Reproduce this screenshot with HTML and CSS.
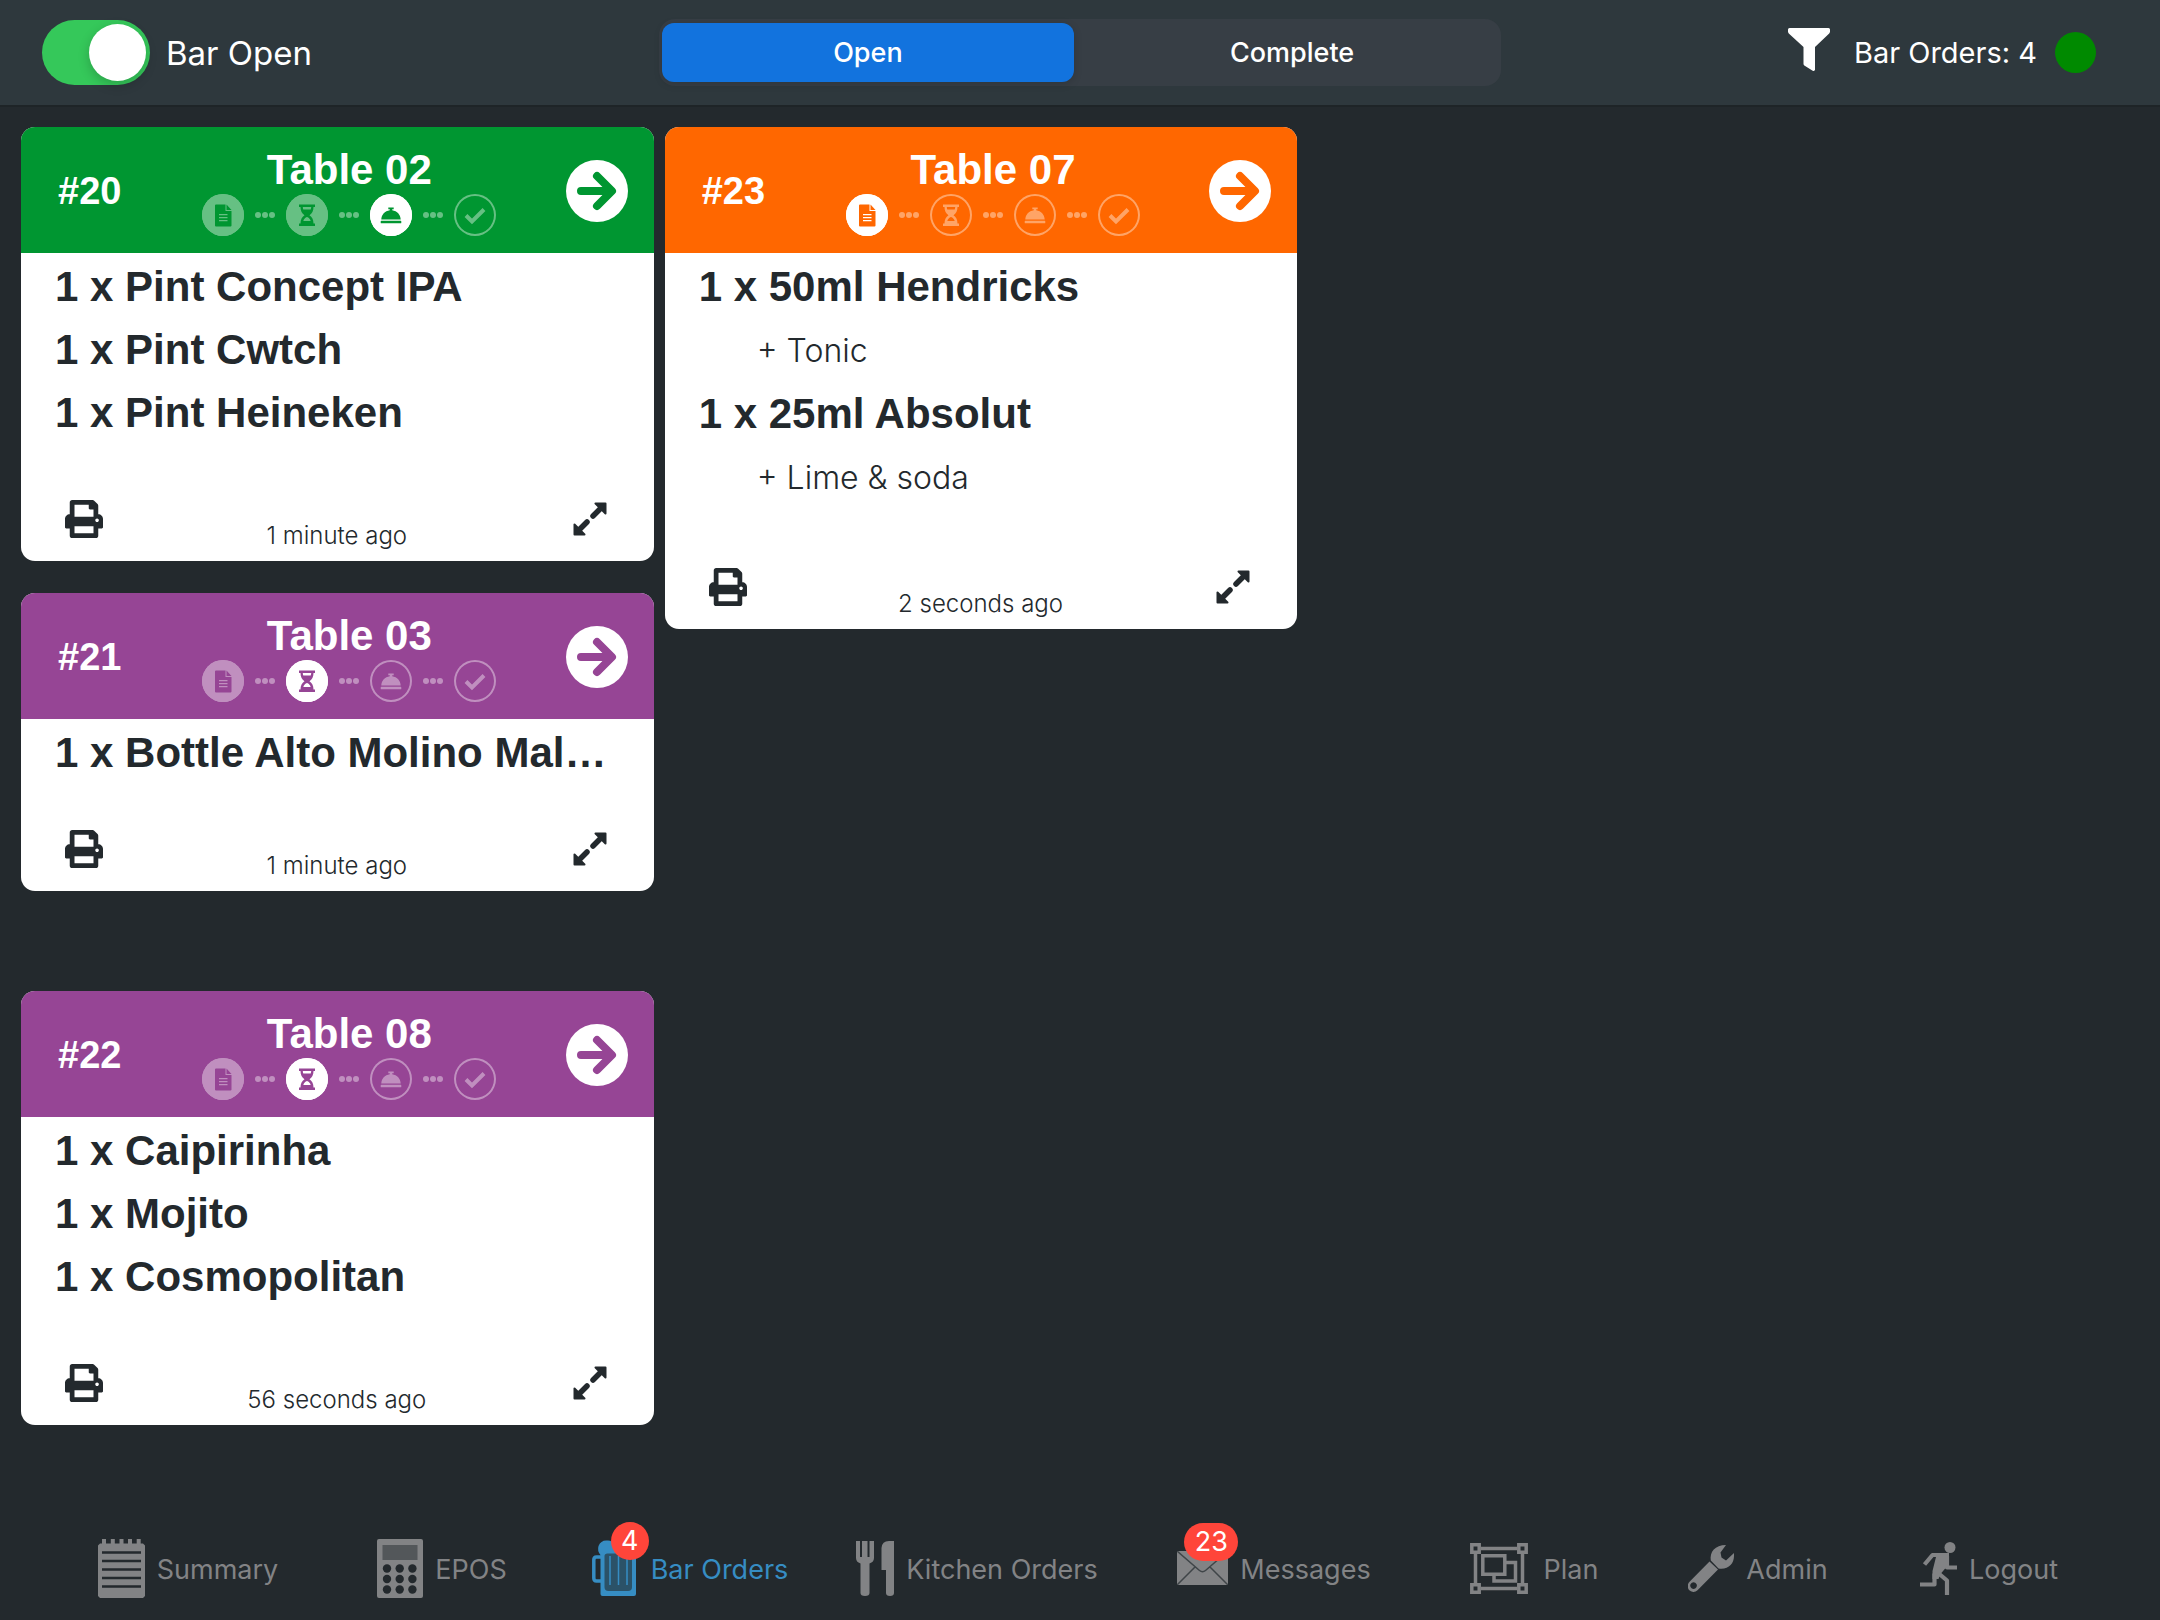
FILE: index.html
```html
<!DOCTYPE html>
<html lang="en">

<head>
    <meta charset="UTF-8">
    <title>Bar Orders</title>
    <meta name="viewport" content="width=device-width, initial-scale=1.0" />
    <link rel="stylesheet" href="styles.css">
</head>

<body>
    <!-- shared icons -->
    <svg class="sprite" aria-hidden="true">
        <symbol id="i-doc" viewBox="0 0 42 42">
            <path d="M14 10.5h9.500v6.500h6v14.500a1 1 0 0 1-1 1h-14.500a1 1 0 0 1-1-1v-20a1 1 0 0 1 1-1z" fill="currentColor" />
            <path d="M24.500 10.500l5 5.500h-5z" fill="currentColor" />
            <path d="M17 20.700h8.500M17 23.700h8.500M17 26.700h8.500" stroke="#fff" stroke-width="1.200" />
        </symbol>
        <symbol id="i-hourglass" viewBox="0 0 42 42">
            <path fill-rule="evenodd" fill="currentColor" d="M13 10.500h16v2.500h-1.500c0 4-1.500 6.500-4 8.300c2.500 1.800 4 4.300 4 8.200h1.500v2.500h-16v-2.500h1.500c0-3.900 1.500-6.400 4-8.200c-2.500-1.800-4-4.300-4-8.300h-1.500zM16.800 13c0 1 .2 1.800.5 2.500h7.400c.3-.7.5-1.500.5-2.500zM17.300 27h7.400c-.6-2-2-3.500-3.700-4c-1.700.5-3.100 2-3.700 4z" />
        </symbol>
        <symbol id="i-bell" viewBox="0 0 42 42">
            <path fill="currentColor" d="M18.300 13.500h5.400v1.800h-1.500v1c5 .6 8.300 4.500 8.500 9.200h-19.400c.2-4.700 3.500-8.600 8.500-9.200v-1h-1.500zM11.300 26.800h19.400a.6.6 0 0 1 .6.6v1.300a.6.6 0 0 1-.6.600h-19.400a.6.6 0 0 1-.6-.6v-1.300a.6.6 0 0 1 .6-.6z" />
        </symbol>
        <symbol id="i-check" viewBox="0 0 42 42">
            <path d="M12 21.500l6 6L30 15.500" fill="none" stroke="currentColor" stroke-width="4" />
        </symbol>
        <symbol id="i-dots" viewBox="0 0 20 6">
            <circle cx="3" cy="3" r="3" />
            <circle cx="10" cy="3" r="3" />
            <circle cx="17" cy="3" r="3" />
        </symbol>
        <symbol id="i-arrow" viewBox="0 0 62 62">
            <circle cx="31" cy="31" r="31" fill="#fff" />
            <path d="M15 31h30M31 16l15 15l-15 15" fill="none" stroke="currentColor" stroke-width="8" stroke-linecap="round" stroke-linejoin="round" />
        </symbol>
        <symbol id="i-print" viewBox="0 0 512 512">
            <path fill="currentColor" d="M448 192V77.250c0-8.490-3.370-16.620-9.370-22.630L393.370 9.370c-6-6-14.140-9.370-22.630-9.370H96C78.330 0 64 14.330 64 32v160c-35.350 0-64 28.650-64 64v112c0 8.840 7.160 16 16 16h48v96c0 17.670 14.330 32 32 32h320c17.670 0 32-14.330 32-32v-96h48c8.840 0 16-7.160 16-16V256c0-35.350-28.650-64-64-64zm-64 256H128v-96h256v96zm0-224H128V64h192v48c0 8.840 7.160 16 16 16h48v96zm48 72c-13.250 0-24-10.750-24-24 0-13.260 10.750-24 24-24s24 10.740 24 24c0 13.250-10.750 24-24 24z" />
        </symbol>
        <symbol id="i-expand" viewBox="0 0 34 34">
            <path fill="currentColor" stroke="currentColor" stroke-width="2" stroke-linejoin="round" d="M22.500 1.500h10v10zM1.500 22.500v10h10z" />
            <path stroke="currentColor" stroke-width="5.500" stroke-linecap="round" d="M28 6l-8 8M6 28l8-8" />
        </symbol>
    </svg>

    <header class="topbar">
        <div class="bar-toggle">
            <input type="checkbox" id="barOpen" class="switch" checked>
            <label for="barOpen">Bar Open</label>
        </div>
        <div class="segmented">
            <button class="segment selected" aria-pressed="true">Open</button>
            <button class="segment" aria-pressed="false">Complete</button>
        </div>
        <div class="status">
            <button class="filter" aria-label="Filter">
                <svg width="42" height="43" viewBox="0 0 42 43">
                    <path fill="#fff" d="M1.500 0h39a1.500 1.500 0 0 1 1.500 1.500v2c0 .8-.3 1.500-.8 2L27 19v22.500c0 1.300-1.300 1.800-2.300 1.200L16.300 37.500c-.5-.4-.8-.9-.8-1.500V19L.8 5.500C.3 5 0 4.300 0 3.500v-2A1.500 1.500 0 0 1 1.500 0z" />
                </svg>
            </button>
            <span>Bar Orders: 4</span>
            <span class="online"></span>
        </div>
    </header>

    <main class="board">
        <div class="column">
            <article class="order ready">
                <header class="order-head">
                    <span class="number">#20</span>
                    <div class="heading">
                        <h2>Table 02</h2>
                        <div class="steps">
                            <svg class="step filled"><use href="#i-doc" /></svg>
                            <svg class="dots"><use href="#i-dots" /></svg>
                            <svg class="step filled"><use href="#i-hourglass" /></svg>
                            <svg class="dots"><use href="#i-dots" /></svg>
                            <svg class="step active"><use href="#i-bell" /></svg>
                            <svg class="dots"><use href="#i-dots" /></svg>
                            <svg class="step"><use href="#i-check" /></svg>
                        </div>
                    </div>
                    <button class="next" aria-label="Next stage"><svg><use href="#i-arrow" /></svg></button>
                </header>
                <ul class="items" style="--lines: 3">
                    <li>1 x Pint Concept IPA</li>
                    <li>1 x Pint Cwtch</li>
                    <li>1 x Pint Heineken</li>
                </ul>
                <footer class="order-foot">
                    <button class="tool" aria-label="Print"><svg class="print"><use href="#i-print" /></svg></button>
                    <time>1 minute ago</time>
                    <button class="tool" aria-label="Expand"><svg class="expand"><use href="#i-expand" /></svg></button>
                </footer>
            </article>

            <div class="slot">
                <article class="order preparing">
                    <header class="order-head">
                        <span class="number">#21</span>
                        <div class="heading">
                            <h2>Table 03</h2>
                            <div class="steps">
                                <svg class="step filled"><use href="#i-doc" /></svg>
                                <svg class="dots"><use href="#i-dots" /></svg>
                                <svg class="step active"><use href="#i-hourglass" /></svg>
                                <svg class="dots"><use href="#i-dots" /></svg>
                                <svg class="step"><use href="#i-bell" /></svg>
                                <svg class="dots"><use href="#i-dots" /></svg>
                                <svg class="step"><use href="#i-check" /></svg>
                            </div>
                        </div>
                        <button class="next" aria-label="Next stage"><svg><use href="#i-arrow" /></svg></button>
                    </header>
                    <ul class="items" style="--lines: 1">
                        <li>1 x Bottle Alto Molino Mal…</li>
                    </ul>
                    <footer class="order-foot">
                        <button class="tool" aria-label="Print"><svg class="print"><use href="#i-print" /></svg></button>
                        <time>1 minute ago</time>
                        <button class="tool" aria-label="Expand"><svg class="expand"><use href="#i-expand" /></svg></button>
                    </footer>
                </article>
            </div>

            <article class="order preparing">
                <header class="order-head">
                    <span class="number">#22</span>
                    <div class="heading">
                        <h2>Table 08</h2>
                        <div class="steps">
                            <svg class="step filled"><use href="#i-doc" /></svg>
                            <svg class="dots"><use href="#i-dots" /></svg>
                            <svg class="step active"><use href="#i-hourglass" /></svg>
                            <svg class="dots"><use href="#i-dots" /></svg>
                            <svg class="step"><use href="#i-bell" /></svg>
                            <svg class="dots"><use href="#i-dots" /></svg>
                            <svg class="step"><use href="#i-check" /></svg>
                        </div>
                    </div>
                    <button class="next" aria-label="Next stage"><svg><use href="#i-arrow" /></svg></button>
                </header>
                <ul class="items" style="--lines: 3">
                    <li>1 x Caipirinha</li>
                    <li>1 x Mojito</li>
                    <li>1 x Cosmopolitan</li>
                </ul>
                <footer class="order-foot">
                    <button class="tool" aria-label="Print"><svg class="print"><use href="#i-print" /></svg></button>
                    <time>56 seconds ago</time>
                    <button class="tool" aria-label="Expand"><svg class="expand"><use href="#i-expand" /></svg></button>
                </footer>
            </article>
        </div>

        <div class="column">
            <article class="order new">
                <header class="order-head">
                    <span class="number">#23</span>
                    <div class="heading">
                        <h2>Table 07</h2>
                        <div class="steps">
                            <svg class="step active"><use href="#i-doc" /></svg>
                            <svg class="dots"><use href="#i-dots" /></svg>
                            <svg class="step"><use href="#i-hourglass" /></svg>
                            <svg class="dots"><use href="#i-dots" /></svg>
                            <svg class="step"><use href="#i-bell" /></svg>
                            <svg class="dots"><use href="#i-dots" /></svg>
                            <svg class="step"><use href="#i-check" /></svg>
                        </div>
                    </div>
                    <button class="next" aria-label="Next stage"><svg><use href="#i-arrow" /></svg></button>
                </header>
                <ul class="items" style="--lines: 4">
                    <li>1 x 50ml Hendricks</li>
                    <li class="extra">+ Tonic</li>
                    <li>1 x 25ml Absolut</li>
                    <li class="extra">+ Lime &amp; soda</li>
                </ul>
                <footer class="order-foot">
                    <button class="tool" aria-label="Print"><svg class="print"><use href="#i-print" /></svg></button>
                    <time>2 seconds ago</time>
                    <button class="tool" aria-label="Expand"><svg class="expand"><use href="#i-expand" /></svg></button>
                </footer>
            </article>
        </div>
    </main>

    <nav class="tabbar">
        <a href="#summary">
            <svg width="47" height="59" viewBox="0 0 47 59">
                <path fill="currentColor" d="M2 4.500h2V0h4v4.500h4.800V0h4v4.500h4.700V0h4v4.500H30V0h4v4.500h4.700V0h4v4.500H45l2 2V57l-2 2H2l-2-2V6.500z" />
                <path stroke="#23292d" stroke-width="2.500" d="M4 13.500h39M4 22h39M4 30.500h39M4 39h39M4 47.500h39" />
            </svg>
            <span class="label">Summary</span>
        </a>
        <a href="#epos">
            <svg width="46" height="59" viewBox="0 0 46 59">
                <rect width="46" height="59" rx="2" fill="currentColor" />
                <path fill="#53575a" d="M5.500 6h35v15h-35z" />
                <g fill="#23292d">
                    <circle cx="10" cy="29.500" r="4.200" /><circle cx="22.700" cy="29.500" r="4.200" /><circle cx="35.400" cy="29.500" r="4.200" />
                    <circle cx="10" cy="40" r="4.200" /><circle cx="22.700" cy="40" r="4.200" /><circle cx="35.400" cy="40" r="4.200" />
                    <circle cx="10" cy="50.500" r="4.200" /><circle cx="22.700" cy="50.500" r="4.200" /><circle cx="35.400" cy="50.500" r="4.200" />
                </g>
            </svg>
            <span class="label">EPOS</span>
        </a>
        <a href="#bar" class="current">
            <span class="icon">
                <svg width="44" height="56" viewBox="0 0 44 56">
                    <path fill="none" stroke="currentColor" stroke-width="3.500" d="M10 17H4.500q-2.700 0-2.700 3v18q0 3 2.700 3H10" />
                    <path fill="currentColor" d="M8.500 15Q5 11 6.500 6Q9 0 15 .500Q20 0 22 4L44 8V54a2 2 0 0 1-2 2H10.500a2 2 0 0 1-2-2z" />
                    <path fill="#2b5268" d="M12.500 16q0-2.500 3-2.500H37q3 0 3 2.500v31q0 4-4 4H16.500q-4 0-4-4z" />
                    <path stroke="currentColor" stroke-width="1.500" d="M18 16v29M26.500 16v29M35 16v29" />
                </svg>
                <span class="badge">4</span>
            </span>
            <span class="label">Bar Orders</span>
        </a>
        <a href="#kitchen">
            <svg width="38" height="55" viewBox="0 0 38 55">
                <path fill="currentColor" d="M0 0h4v16h2V0h5.500v16h2V0H18v17q0 4-4.500 5.500V52q0 3-4.500 3t-4.500-3V22.500Q0 21 0 17zM38 0v52q0 3-4 3t-4-3V29h-4.500V7Q26 0 33 0z" />
            </svg>
            <span class="label">Kitchen Orders</span>
        </a>
        <a href="#messages">
            <span class="icon">
                <svg width="51" height="34" viewBox="0 0 51 34">
                    <path fill="currentColor" d="M0 0h51v34H0z" />
                    <path fill="none" stroke="#3f4548" stroke-width="1.500" d="M0 0l22.500 19.500q3 2.500 6 0L51 0M0 34l18-18M51 34L33 16" />
                </svg>
                <span class="badge wide">23</span>
            </span>
            <span class="label">Messages</span>
        </a>
        <a href="#plan" class="spaced">
            <svg width="58" height="51" viewBox="0 0 58 51">
                <g fill="none" stroke="currentColor" stroke-width="3.500">
                    <path d="M5.500 11v29M52.500 11v29M11 5.500h36M11 45.500h36" />
                    <path d="M1.800 1.800h7.400v7.400H1.800zM48.800 1.800h7.400v7.400h-7.400zM1.800 41.800h7.400v7.400H1.800zM48.800 41.800h7.400v7.400h-7.400z" />
                    <path d="M12.800 12.800h22v18.500h-22zM36 19.500h9.500v18.500h-21.500v-6" />
                </g>
            </svg>
            <span class="label">Plan</span>
        </a>
        <a href="#admin">
            <svg width="46" height="47" viewBox="0 0 46 47">
                <path fill="currentColor" fill-rule="evenodd" d="M1.800 36.500L21.500 16.500l8.500 8L9.500 45.300a6.100 6.100 0 0 1-8.500-.3a6.300 6.300 0 0 1 .8-8.500zM5.500 37.300a3.300 3.300 0 1 0 .1 0z" />
                <path fill="currentColor" d="M22.800 15.500C21.500 7 27 0 38 0l-5.500 7.500l1 5l4.500 3l8-7.500v3C46 19 40 25 30.500 23.500z" />
            </svg>
            <span class="label">Admin</span>
        </a>
        <a href="#logout">
            <svg width="37" height="53" viewBox="0 0 37 53">
                <circle cx="30" cy="5.500" r="5.500" fill="currentColor" />
                <path fill="none" stroke="currentColor" stroke-width="4.200" stroke-linejoin="round" d="M4.500 22.500l8-9.500H24M27 14v11.500h10M0 42.500h14.500v-11M17 30l10 8.500V53" />
                <path fill="currentColor" d="M17 11h12v11l-8.500 10l-2 5h-6v-8z" />
            </svg>
            <span class="label">Logout</span>
        </a>
    </nav>
</body>

</html>
```
FILE: styles.css
```css
* {
    margin: 0;
    padding: 0;
    box-sizing: border-box;
}

body {
    min-height: 100vh;
    display: flex;
    flex-direction: column;
    font-family: Inter, "Liberation Sans", sans-serif;
    background: #23292d;
    color: #fff;
}

button {
    font: inherit;
    color: inherit;
    background: none;
    border: none;
    cursor: pointer;
}

svg {
    display: block;
    flex-shrink: 0;
}

.sprite {
    position: absolute;
    width: 0;
    height: 0;
}

/* top bar */
.topbar {
    display: grid;
    grid-template-columns: 1fr 39% 1fr;
    align-items: center;
    height: 107px;
    background: #2e383d;
    border-bottom: 2px solid #1e2427;
}

.bar-toggle {
    display: flex;
    align-items: center;
    gap: 16px;
    padding-left: 42px;
    font-size: 33px;
}

.switch {
    appearance: none;
    display: flex;
    justify-content: flex-end;
    width: 108px;
    height: 65px;
    padding: 4px;
    border-radius: 33px;
    background: #35c85a;
    cursor: pointer;
}

.switch:not(:checked) {
    justify-content: flex-start;
    background: #5a6266;
}

.switch::before {
    content: '';
    width: 57px;
    height: 57px;
    border-radius: 50%;
    background: #fff;
    box-shadow: 0 4px 12px rgba(0, 0, 0, 0.2);
}

.segmented {
    display: grid;
    grid-template-columns: 1fr 1fr;
    gap: 12px;
    height: 67px;
    padding: 4px 3px;
    border-radius: 16px;
    background: #373e45;
}

.segment {
    border-radius: 12px;
    font-size: 27px;
    font-weight: 500;
}

.segment.selected {
    background: #1273de;
    box-shadow: 0 2px 8px rgba(0, 0, 0, 0.15);
}

.status {
    display: flex;
    justify-content: flex-end;
    align-items: center;
    padding-right: 64px;
    font-size: 29px;
}

.filter {
    margin-right: 24px;
    padding-bottom: 6px;
}

.online {
    width: 41px;
    height: 41px;
    margin-left: 18px;
    border-radius: 50%;
    background: #008a00;
}

/* order cards */
.board {
    flex: 1;
    display: grid;
    grid-template-columns: repeat(3, 30%);
    column-gap: 11px;
    padding: 20px 30px 20px 21px;
    font-family: "Liberation Sans", Arial, sans-serif;
}

.column {
    display: flex;
    flex-direction: column;
    gap: 32px;
    min-width: 0;
}

.slot {
    min-height: 366px;
}

.order {
    overflow: hidden;
    border-radius: 14px;
    background: #fff;
    color: #23292d;
}

.order.new {
    --stage: #ff6700;
}

.order.preparing {
    --stage: #964595;
}

.order.ready {
    --stage: #009631;
}

.order-head {
    display: flex;
    align-items: center;
    height: 126px;
    padding: 2px 26px 0 37px;
    background: var(--stage);
    color: #fff;
}

.number {
    min-width: 75px;
    font-size: 38px;
    font-weight: bold;
}

.heading {
    flex: 1;
    display: flex;
    flex-direction: column;
    align-items: center;
}

h2 {
    font-size: 42px;
    line-height: 48px;
}

.steps {
    display: flex;
    align-items: center;
    gap: 11px;
}

.step {
    width: 42px;
    height: 42px;
    border-radius: 50%;
    box-shadow: inset 0 0 0 2px #fff;
    opacity: 0.4;
}

.step.filled,
.step.active {
    background: #fff;
    color: var(--stage);
}

.step.active {
    opacity: 1;
}

.dots {
    width: 20px;
    height: 6px;
    fill: #fff;
    opacity: 0.4;
}

.next {
    color: var(--stage);
}

.next svg {
    width: 62px;
    height: 62px;
}

.items {
    height: calc(var(--lines) * 68px);
    padding: 2px 36px 0 34px;
    list-style: none;
    font-size: 42px;
    font-weight: bold;
    line-height: 63px;
}

.items li {
    overflow: hidden;
    white-space: nowrap;
    text-overflow: ellipsis;
}

.items .extra {
    padding: 1px 0 0 58px;
    font-family: Inter, sans-serif;
    font-size: 32px;
    font-weight: 300;
}

.order-foot {
    display: flex;
    justify-content: space-between;
    align-items: flex-start;
    height: 104px;
    padding: 43px 45px 0 44px;
}

.order-foot time {
    padding-top: 21px;
    font-family: Inter, sans-serif;
    font-size: 24px;
    font-weight: 300;
    line-height: 30px;
}

.tool {
    display: grid;
    place-items: center;
    width: 38px;
    height: 38px;
}

.print {
    width: 38px;
    height: 38px;
}

.expand {
    width: 34px;
    height: 34px;
}

/* bottom tabs */
.tabbar {
    display: grid;
    grid-template-columns: 256fr 252fr 244fr 330fr 264fr 256fr 192fr 270fr;
    height: 104px;
    padding: 0 36px 0 60px;
    font-size: 27px;
}

.tabbar a {
    display: flex;
    justify-content: center;
    align-items: center;
    gap: 12px;
    color: #828385;
    text-decoration: none;
    white-space: nowrap;
}

.tabbar a.current {
    gap: 15px;
    color: #368dc3;
}

.tabbar a.spaced {
    gap: 16px;
}

.label {
    padding-top: 3px;
}

.icon {
    position: relative;
}

.badge {
    position: absolute;
    bottom: 36px;
    left: 19px;
    min-width: 38px;
    border-radius: 19px;
    background: #ff453a;
    color: #fff;
    line-height: 38px;
    text-align: center;
}

.badge.wide {
    bottom: 24px;
    left: 7px;
    min-width: 54px;
}
```
